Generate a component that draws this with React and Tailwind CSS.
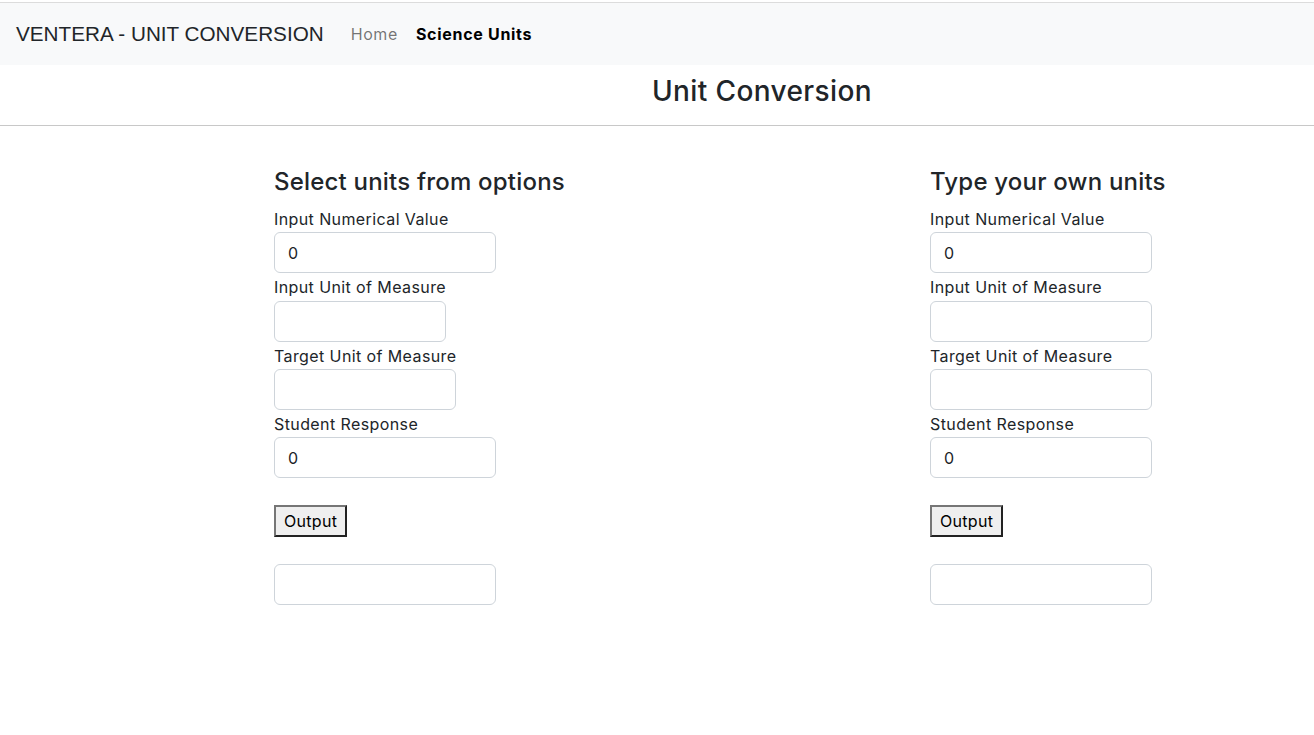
import React from 'react';

const fieldLabel = 'block h-[27.33px] pt-[2px] leading-[25px] text-base tracking-[0.4px] text-[#212529]';
const fieldInput = 'block h-[41px] rounded-md border border-[#ced4da] bg-white px-[13px] text-base text-[#212529] outline-none';

const UnitForm = ({ title, unitWidths }) => {
    return (
        <div className="pl-[274px]">
            <h4 className="mb-[9px] text-2xl leading-[29px] font-medium tracking-[0.2px] text-[#212529]">{title}</h4>
            <label className={fieldLabel}>Input Numerical Value</label>
            <input className={`${fieldInput} w-[222px]`} defaultValue="0" />
            <label className={fieldLabel}>Input Unit of Measure</label>
            <input className={`${fieldInput} ${unitWidths[0]}`} defaultValue="" />
            <label className={fieldLabel}>Target Unit of Measure</label>
            <input className={`${fieldInput} ${unitWidths[1]}`} defaultValue="" />
            <label className={fieldLabel}>Student Response</label>
            <input className={`${fieldInput} w-[222px]`} defaultValue="0" />

            <button className="mt-[27px] block h-[32px] border-2 border-t-[#767676] border-l-[#767676] border-r-[#222] border-b-[#222] bg-[#efefef] px-[8px] text-base leading-none tracking-[0.3px] text-black">
                Output
            </button>

            <input className={`${fieldInput} mt-[27px] w-[222px]`} defaultValue="" />
        </div>
    );
};

const App = () => {
    return (
        <div className="min-h-[735px] bg-white" style={{ fontFamily: 'Inter, "Noto Sans", sans-serif' }}>
            {/* Navbar */}
            <div className="mt-[2px] border-t border-[#dcdcdc]" />
            <nav className="flex h-[62px] items-center bg-[#f8f9fa] px-4">
                <span className="text-[20.7px] text-[#212529]" style={{ fontFamily: '"Liberation Sans", Arial, sans-serif' }}>
                    VENTERA - UNIT CONVERSION
                </span>
                <span className="ml-[27px] text-base tracking-[0.6px] text-[rgba(0,0,0,0.55)]">Home</span>
                <span className="ml-[18px] text-base font-bold tracking-[0.7px] text-black">Science Units</span>
            </nav>

            {/* Page title */}
            <div className="flex h-[60px] items-center justify-center pb-[9px] pl-[210px]">
                <h3 className="text-[28px] font-medium tracking-[0.4px] text-[#212529]">Unit Conversion</h3>
            </div>
            <hr className="border-t border-[#c8c8c8]" />

            {/* Forms */}
            <div className="grid grid-cols-[656px_1fr] pt-[41px]">
                <UnitForm title="Select units from options" unitWidths={['w-[172px]', 'w-[182px]']} />
                <UnitForm title="Type your own units" unitWidths={['w-[222px]', 'w-[222px]']} />
            </div>
        </div>
    );
};

export default App;
